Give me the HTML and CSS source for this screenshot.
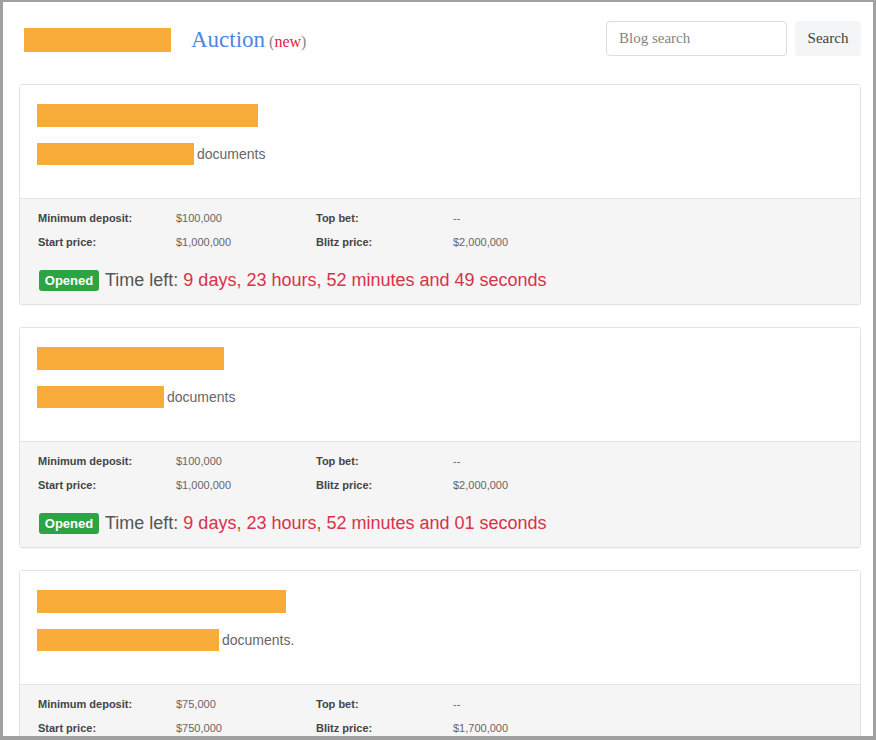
FILE: index.html
```html
<!DOCTYPE html>
<html>
<head>
<meta charset="utf-8">
<link rel="stylesheet" href="styles.css">
</head>
<body>
<div class="frame">
  <header class="topbar">
    <div class="brand">
      <span class="logo-bar"></span>
      <a class="nav-link">Auction</a><span class="new-tag">(<span class="new-word">new</span>)</span>
    </div>
    <form class="search">
      <input class="search-input" type="text" placeholder="Blog search">
      <button class="search-btn" type="button">Search</button>
    </form>
  </header>

  <div class="card">
    <div class="card-body">
      <span class="bar bar-title" style="width:221px"></span>
      <div class="doc-line"><span class="bar bar-doc" style="width:157px"></span><span class="doc-text">documents</span></div>
    </div>
    <div class="card-foot">
      <div class="grid">
        <span class="lbl">Minimum deposit:</span><span class="val">$100,000</span><span class="lbl">Top bet:</span><span class="val">--</span>
        <span class="lbl">Start price:</span><span class="val">$1,000,000</span><span class="lbl">Blitz price:</span><span class="val">$2,000,000</span>
      </div>
      <div class="status"><span class="badge">Opened</span><span class="time-label">Time left:</span><span class="time-val">9 days, 23 hours, 52 minutes and 49 seconds</span></div>
    </div>
  </div>

  <div class="card">
    <div class="card-body">
      <span class="bar bar-title" style="width:187px"></span>
      <div class="doc-line"><span class="bar bar-doc" style="width:127px"></span><span class="doc-text">documents</span></div>
    </div>
    <div class="card-foot">
      <div class="grid">
        <span class="lbl">Minimum deposit:</span><span class="val">$100,000</span><span class="lbl">Top bet:</span><span class="val">--</span>
        <span class="lbl">Start price:</span><span class="val">$1,000,000</span><span class="lbl">Blitz price:</span><span class="val">$2,000,000</span>
      </div>
      <div class="status"><span class="badge">Opened</span><span class="time-label">Time left:</span><span class="time-val">9 days, 23 hours, 52 minutes and 01 seconds</span></div>
    </div>
  </div>

  <div class="card">
    <div class="card-body">
      <span class="bar bar-title" style="width:249px"></span>
      <div class="doc-line"><span class="bar bar-doc" style="width:182px"></span><span class="doc-text">documents.</span></div>
    </div>
    <div class="card-foot">
      <div class="grid">
        <span class="lbl">Minimum deposit:</span><span class="val">$75,000</span><span class="lbl">Top bet:</span><span class="val">--</span>
        <span class="lbl">Start price:</span><span class="val">$750,000</span><span class="lbl">Blitz price:</span><span class="val">$1,700,000</span>
      </div>
      <div class="status"><span class="badge">Opened</span><span class="time-label">Time left:</span><span class="time-val">9 days, 23 hours, 52 minutes and 01 seconds</span></div>
    </div>
  </div>
</div>
</body>
</html>
```

FILE: styles.css
```css
html, body {
  margin: 0;
  padding: 0;
  background: #ffffff;
}
body {
  width: 876px;
  height: 740px;
  overflow: hidden;
}
.frame {
  box-sizing: border-box;
  width: 876px;
  height: 740px;
  border-style: solid;
  border-color: #a0a0a0;
  border-width: 2px 3px 4px 3px;
  padding: 19px 12px 0 16px;
  overflow: hidden;
  font-family: "Liberation Sans", Arial, sans-serif;
}
.topbar {
  display: flex;
  justify-content: space-between;
  align-items: flex-start;
  height: 63px;
}
.brand {
  display: flex;
  align-items: center;
  padding-left: 5px;
  margin-top: 7px;
  height: 24px;
}
.logo-bar {
  display: block;
  width: 147px;
  height: 24px;
  background: #f9ab3a;
}
.nav-link {
  font-family: "Liberation Serif", "Times New Roman", serif;
  font-size: 23px;
  color: #4a86e8;
  margin-left: 20px;
}
.new-tag {
  font-family: "Liberation Serif", "Times New Roman", serif;
  font-size: 16px;
  color: #888;
  margin-left: 4px;
  margin-top: 4px;
}
.new-word {
  color: #e0243c;
}
.search {
  display: flex;
  gap: 8px;
  margin: 0;
}
.search-input {
  box-sizing: border-box;
  width: 181px;
  height: 35px;
  border: 1px solid #dcdcdc;
  border-radius: 4px;
  padding: 0 12px;
  font-family: "Liberation Serif", "Times New Roman", serif;
  font-size: 15px;
  color: #555;
  outline: none;
}
.search-input::placeholder {
  color: #858585;
}
.search-btn {
  box-sizing: border-box;
  width: 66px;
  height: 35px;
  border: none;
  border-radius: 4px;
  background: #f4f5f6;
  font-family: "Liberation Serif", "Times New Roman", serif;
  font-size: 15px;
  color: #3d3d3d;
  padding: 0;
}
.card {
  border: 1px solid #e2e2e2;
  border-radius: 3px;
  margin-bottom: 22px;
  box-shadow: 0 1px 1px rgba(0,0,0,0.03);
}
.card-body {
  box-sizing: border-box;
  height: 114px;
  padding: 19px 17px 0 17px;
  background: #fff;
  border-bottom: 1px solid #e5e5e5;
}
.bar {
  display: block;
  background: #f9ab3a;
}
.bar-title {
  height: 23px;
  margin-bottom: 16px;
}
.doc-line {
  display: flex;
  align-items: center;
}
.bar-doc {
  height: 22px;
}
.doc-text {
  font-size: 14px;
  color: #666;
  margin-left: 3px;
}
.card-foot {
  background: #f5f5f5;
  padding: 7px 18px 13px 18px;
}
.grid {
  display: grid;
  grid-template-columns: 138px 140px 137px auto;
  grid-auto-rows: 24px;
  align-items: center;
  font-size: 11px;
}
.lbl {
  font-weight: bold;
  color: #444;
}
.val {
  color: #666;
}
.status {
  display: flex;
  align-items: center;
  margin-top: 16px;
  height: 21px;
}
.badge {
  display: inline-flex;
  align-items: center;
  justify-content: center;
  width: 60px;
  height: 21px;
  margin-left: 1px;
  border-radius: 3px;
  background: #2ca444;
  color: #fff;
  font-weight: bold;
  font-size: 13px;
}
.time-label {
  font-size: 18px;
  color: #555;
  margin-left: 6px;
}
.time-val {
  font-size: 18px;
  color: #d93149;
  margin-left: 5px;
}
```
